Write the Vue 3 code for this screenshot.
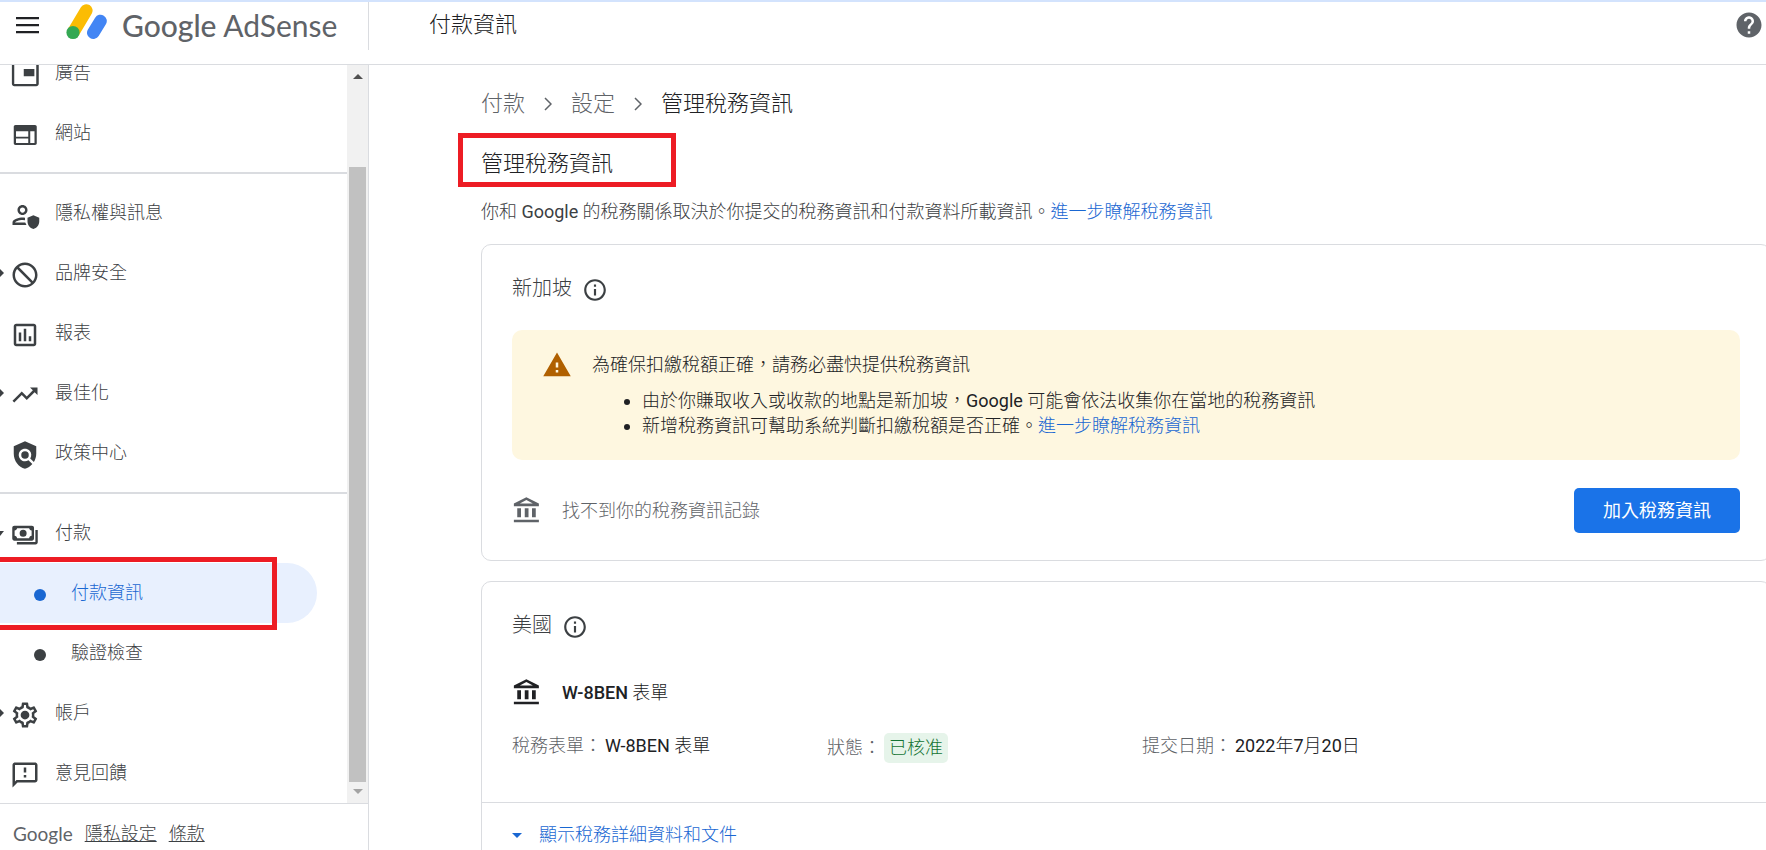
<script setup>
const groups = [
  [
    { label: '廣告', icon: 'ads' },
    { label: '網站', icon: 'sites' },
  ],
  [
    { label: '隱私權與訊息', icon: 'privacy' },
    { label: '品牌安全', icon: 'block', arrow: 'right' },
    { label: '報表', icon: 'reports' },
    { label: '最佳化', icon: 'trend', arrow: 'right' },
    { label: '政策中心', icon: 'policy' },
  ],
  [
    { label: '付款', icon: 'payments', arrow: 'down' },
    { label: '付款資訊', sub: true, active: true },
    { label: '驗證檢查', sub: true },
    { label: '帳戶', icon: 'settings', arrow: 'right' },
    { label: '意見回饋', icon: 'feedback' },
  ],
]

const icons = {
  ads: 'M19.500 13h-8.500V7.200h8.500V13zm3.500 6V4c0-1.100-.9-2-2-2H3.500c-1.100 0-2 .9-2 2v15c0 1.100.9 2 2 2H21c1.100 0 2-.9 2-2zm-2 .2H3.400V3.900H21v15.300z',
  sites: 'M20 4H4.400C3.600 4 3 4.600 3 5.400v13.200c0 .8.6 1.400 1.400 1.400H20c.8 0 1.400-.6 1.400-1.400V5.400C21.400 4.600 20.800 4 20 4zM14.600 18.400H4.800v-3.700h9.800v3.700zm0-5H4.800V9h9.800v4.400zm5 5h-3.400V9h3.400v9.400z',
  privacy: 'M10 12c2.210 0 4-1.790 4-4s-1.790-4-4-4-4 1.790-4 4 1.790 4 4 4zm0-6.100c1.160 0 2.100.940 2.100 2.100s-.940 2.100-2.100 2.100S7.900 9.160 7.900 8 8.840 5.900 10 5.900zM4 18c.220-.720 3.310-2.100 6.300-2l1.700.100V14.100c-.7-.07-1.300-.1-2-.1-2.670 0-8 1.340-8 4v2h11.200l-1-2H4zM18.700 12.200l-4.700 2v3c0 2.900 2 5.200 4.700 6 2.700-.8 4.700-3.100 4.700-6v-3l-4.700-2z',
  block: 'M12 2C6.480 2 2 6.480 2 12s4.480 10 10 10 10-4.480 10-10S17.520 2 12 2zM4 12c0-1.850.630-3.550 1.690-4.900L16.900 18.310C15.550 19.370 13.850 20 12 20c-4.420 0-8-3.580-8-8zm14.310 4.900L7.100 5.690C8.450 4.630 10.150 4 12 4c4.420 0 8 3.580 8 8 0 1.850-.630 3.550-1.690 4.900z',
  reports: 'M19 3H5c-1.100 0-2 .9-2 2v14c0 1.100.9 2 2 2h14c1.100 0 2-.9 2-2V5c0-1.100-.9-2-2-2zm0 16H5V5h14v14zM7 10h2v7H7zm4-3h2v10h-2zm4 6h2v4h-2z',
  trend: 'M16 6l2.290 2.290-4.880 4.880-4-4L2 16.590 3.410 18l6-6 4 4 6.300-6.290L22 12V6z',
  policy: 'M21 5l-9-4-9 4v6c0 5.550 3.840 10.740 9 12 2.300-.560 4.330-1.900 5.880-3.710l-3.120-3.120c-1.940 1.290-4.580 1.070-6.290-.640-1.950-1.950-1.950-5.120 0-7.070 1.950-1.950 5.120-1.950 7.070 0 1.710 1.710 1.920 4.350.640 6.290l2.900 2.900C20.290 15.690 21 13.380 21 11V5zM12 9a3 3 0 1 0 0 6 3 3 0 0 0 0-6z',
  settings: 'M19.430 12.980c.040-.320.070-.640.070-.980s-.030-.660-.070-.980l2.110-1.650c.190-.150.240-.420.120-.640l-2-3.460c-.090-.160-.260-.250-.440-.250-.060 0-.120.010-.170.030l-2.490 1c-.520-.4-1.080-.730-1.690-.980l-.380-2.650C14.460 2.180 14.250 2 14 2h-4c-.250 0-.460.180-.490.420l-.380 2.650c-.610.250-1.170.590-1.690.980l-2.490-1c-.060-.020-.120-.030-.180-.030-.170 0-.340.090-.430.250l-2 3.460c-.130.220-.070.490.120.640l2.110 1.650c-.040.320-.070.650-.070.980s.030.660.070.980l-2.110 1.650c-.190.150-.240.420-.120.640l2 3.460c.090.160.260.250.440.250.060 0 .120-.010.170-.030l2.490-1c.520.4 1.080.730 1.690.980l.380 2.650c.030.240.240.420.490.420h4c.250 0 .460-.180.490-.420l.380-2.650c.610-.250 1.170-.590 1.690-.980l2.490 1c.060.020.120.030.180.030.170 0 .340-.090.430-.250l2-3.460c.120-.220.070-.490-.120-.640l-2.110-1.650zm-1.980-1.710c.040.310.050.520.050.730s-.020.430-.050.730l-.140 1.130.890.7 1.080.840-.7 1.210-1.270-.510-1.040-.420-.9.680c-.430.320-.840.560-1.250.730l-1.060.430-.160 1.130-.2 1.350h-1.400l-.350-2.480-1.060-.430c-.430-.180-.830-.410-1.230-.710l-.910-.7-1.060.430-1.270.510-.7-1.210 1.970-1.540-.140-1.130c-.030-.310-.050-.540-.050-.740s.020-.430.050-.730l.140-1.130-1.970-1.540.7-1.210 2.310.940.9-.680c.430-.320.840-.560 1.250-.730l1.060-.430.360-2.480h1.390l.350 2.480 1.060.430c.430.180.830.410 1.230.710l.910.7 2.330-.940.7 1.210-1.960 1.550.140 1.130zM12 8.500a3.500 3.500 0 1 1 0 7 3.500 3.500 0 0 1 0-7z',
  feedback: 'M20 2H4c-1.100 0-2 .9-2 2v18l4-4h14c1.100 0 2-.9 2-2V4c0-1.100-.9-2-2-2zm0 14H5.170L4 17.170V4h16v12zm-9-4h2v2h-2zm0-6h2v4h-2z',
  payments: 'M17.500 4.500H3.500C2.500 4.500 1.800 5.200 1.800 6.200v8.600c0 1 .7 1.700 1.700 1.700h14c1 0 1.700-.7 1.700-1.700V6.200c0-1-.7-1.700-1.700-1.700zM17.300 12.600c-1.100.2-1.800.9-2 1.900H5.700c-.2-1-.9-1.700-2-1.900V8.400c1.100-.2 1.800-.9 2-1.900h9.600c.2 1 .9 1.700 2 1.900v4.200zM10.500 7.700a2.800 2.800 0 1 0 0 5.600 2.800 2.800 0 0 0 0-5.600zM22.200 8v9.800c0 1-.7 1.700-1.700 1.700H5.500v-1.900h14.800V8h1.900z',
  bank: 'M7.200 9.800H4.200V17h3V9.800zm6 0h-3V17h3V9.800zM21.500 19h-20v2h20v-2zM19 9.800h-3V17h3V9.800zM11.500 3.260 16.710 6H6.290l5.210-2.740zM11.500 1l-10 5v2.200h20V6l-10-5z',
  info: 'M11 7h2v2h-2zm0 4h2v6h-2zm1-9C6.480 2 2 6.480 2 12s4.480 10 10 10 10-4.480 10-10S17.520 2 12 2zm0 18c-4.410 0-8-3.590-8-8s3.590-8 8-8 8 3.590 8 8-3.590 8-8 8z',
}
</script>

<template>
  <div class="app">
    <header class="topbar">
      <div class="brand">
        <button class="icon-button" aria-label="選單">
          <svg class="menu-icon" viewBox="0 0 24 18"><path d="M1 1h23v2.200H1zM1 8h23v2.200H1zM1 15h23v2.200H1z" /></svg>
        </button>
        <svg class="logo" viewBox="0 0 42 38">
          <path d="M7.500 28 20.300 6.500" stroke="#fbbc04" stroke-width="12.600" stroke-linecap="round" />
          <path d="M27.300 28.700 34.500 17" stroke="#4285f4" stroke-width="12.600" stroke-linecap="round" />
          <circle cx="7" cy="28.500" r="6.600" fill="#34a853" />
        </svg>
        <span class="wordmark"><span class="wordmark-strong">Google</span> AdSense</span>
      </div>
      <div class="page-title">付款資訊</div>
      <button class="icon-button help" aria-label="說明">
        <svg viewBox="0 0 24 24"><path d="M12 2C6.480 2 2 6.480 2 12s4.480 10 10 10 10-4.480 10-10S17.520 2 12 2zm1 17h-2v-2h2v2zm2.070-7.750-.9.920C13.450 12.900 13 13.500 13 15h-2v-.5c0-1.100.450-2.100 1.170-2.830l1.240-1.260c.370-.360.590-.860.590-1.410 0-1.100-.9-2-2-2s-2 .9-2 2H8c0-2.210 1.790-4 4-4s4 1.790 4 4c0 .880-.360 1.680-.930 2.250z" /></svg>
      </button>
    </header>

    <div class="body">
      <aside class="sidebar">
        <div class="scroller">
          <nav class="nav">
            <ul v-for="(group, i) in groups" :key="i" class="group">
              <li v-for="item in group" :key="item.label" class="entry">
                <a href="#" class="item" :class="{ sub: item.sub, active: item.active }">
                  <span v-if="item.arrow" class="arrow" :class="item.arrow"></span>
                  <span v-if="item.sub" class="dot"></span>
                  <svg v-else class="nav-icon" viewBox="0 0 24 24"><path fill-rule="evenodd" :d="icons[item.icon]" /></svg>
                  <span>{{ item.label }}</span>
                </a>
                <span v-if="item.active" class="mark mark-nav"></span>
              </li>
            </ul>
          </nav>
          <div class="scrollbar">
            <span class="scroll-arrow up"></span>
            <span class="thumb"></span>
            <span class="scroll-arrow down"></span>
          </div>
        </div>
        <footer class="legal">
          <span class="legal-logo">Google</span>
          <a href="#">隱私設定</a>
          <a href="#">條款</a>
        </footer>
      </aside>

      <main class="main">
        <nav class="crumbs">
          <a href="#">付款</a>
          <svg viewBox="0 0 8 14"><path d="M1 1l6 6-6 6" /></svg>
          <a href="#">設定</a>
          <svg viewBox="0 0 8 14"><path d="M1 1l6 6-6 6" /></svg>
          <span class="current">管理稅務資訊</span>
        </nav>
        <div class="heading">
          <h1>管理稅務資訊</h1>
          <span class="mark mark-heading"></span>
        </div>
        <p class="intro">你和 <span class="latin">Google</span> 的稅務關係取決於你提交的稅務資訊和付款資料所載資訊。<a href="#">進一步瞭解稅務資訊</a></p>

        <section class="card">
          <div class="card-title">
            <h2>新加坡</h2>
            <svg viewBox="0 0 24 24"><path :d="icons.info" /></svg>
          </div>
          <div class="notice">
            <svg viewBox="0 0 24 24"><path d="M1 21h22L12 2 1 21zm12-3h-2v-2h2v2zm0-4h-2v-4h2v4z" /></svg>
            <div>
              <p>為確保扣繳稅額正確，請務必盡快提供稅務資訊</p>
              <ul>
                <li>由於你賺取收入或收款的地點是新加坡，<span class="latin">Google</span> 可能會依法收集你在當地的稅務資訊</li>
                <li>新增稅務資訊可幫助系統判斷扣繳稅額是否正確。<a href="#">進一步瞭解稅務資訊</a></li>
              </ul>
            </div>
          </div>
          <div class="record">
            <svg class="bank" viewBox="0 0 24 24"><path fill-rule="evenodd" :d="icons.bank" /></svg>
            <span>找不到你的稅務資訊記錄</span>
            <button class="primary">加入稅務資訊</button>
          </div>
        </section>

        <section class="card">
          <div class="card-title">
            <h2>美國</h2>
            <svg viewBox="0 0 24 24"><path :d="icons.info" /></svg>
          </div>
          <div class="form-name">
            <svg class="bank" viewBox="0 0 24 24"><path fill-rule="evenodd" :d="icons.bank" /></svg>
            <span><span class="medium">W-8BEN</span> 表單</span>
          </div>
          <dl class="facts">
            <div><dt>稅務表單：</dt><dd><span class="latin">W-8BEN</span> 表單</dd></div>
            <div><dt>狀態：</dt><dd class="badge">已核准</dd></div>
            <div><dt>提交日期：</dt><dd><span class="latin">2022</span>年<span class="latin">7</span>月<span class="latin">20</span>日</dd></div>
          </dl>
          <button class="expand"><span class="caret"></span>顯示稅務詳細資料和文件</button>
        </section>
      </main>
    </div>
  </div>
</template>

<style>
body {
  overflow: hidden;
  background: #fff;
}
</style>

<style scoped>
.app {
  height: 100vh;
  display: flex;
  flex-direction: column;
  box-sizing: border-box;
  border-top: 2px solid #d3e3fd;
  font-family: Roboto, "Noto Sans CJK TC", sans-serif;
  font-size: 18px;
  font-weight: 300;
  line-height: 26px;
  color: #202124;
}
.app * {
  box-sizing: border-box;
}
ul, p, h1, h2, dl, dd {
  margin: 0;
  padding: 0;
  font-size: inherit;
  font-weight: inherit;
}
a {
  color: #1a67d2;
  text-decoration: none;
}
button {
  margin: 0;
  border: 0;
  background: none;
  font: inherit;
  cursor: pointer;
}
.latin {
  font-weight: 400;
}
.medium {
  font-weight: 500;
}
.mark {
  position: absolute;
  border: 5px solid #ed1c24;
  pointer-events: none;
}

.topbar {
  flex: none;
  height: 63px;
  display: flex;
  align-items: flex-start;
  border-bottom: 1px solid #dadce0;
}
.brand {
  width: 369px;
  height: 48px;
  display: flex;
  align-items: center;
  padding: 0 0 2px 15px;
  border-right: 1px solid #dadce0;
}
.icon-button {
  display: flex;
  padding: 0;
}
.menu-icon {
  width: 24px;
  height: 18px;
  fill: #202124;
}
.logo {
  width: 42px;
  height: 38px;
  margin: 0 14px 4px 27px;
  fill: none;
}
.wordmark {
  font-family: Lato, sans-serif;
  font-size: 30px;
  font-weight: 400;
  line-height: 40px;
  color: #5f6368;
}
.wordmark-strong {
  font-weight: 500;
}
.page-title {
  flex: 1;
  padding-left: 60px;
  font-size: 22px;
  line-height: 46px;
}
.help {
  margin: 8px 2px 0 0;
}
.help svg {
  width: 30px;
  height: 30px;
  fill: #5f6368;
}

.body {
  flex: 1;
  min-height: 0;
  display: flex;
}
.sidebar {
  flex: none;
  width: 369px;
  display: flex;
  flex-direction: column;
  border-right: 1px solid #dadce0;
  color: #3c4043;
}
.scroller {
  flex: 1;
  min-height: 0;
  display: flex;
}
.nav {
  flex: 1;
  display: flex;
  flex-direction: column;
  justify-content: flex-end;
  overflow: hidden;
}
.group {
  flex: none;
  list-style: none;
}
.group + .group {
  margin-top: 9px;
  padding-top: 9px;
  border-top: 2px solid #dadce0;
}
.entry {
  position: relative;
}
.item {
  position: relative;
  height: 60px;
  margin-right: 30px;
  display: flex;
  align-items: center;
  gap: 15px;
  padding-left: 10px;
  color: inherit;
}
.item.sub {
  gap: 25px;
  padding-left: 34px;
}
.item.active {
  background: #e8f0fe;
  border-radius: 0 30px 30px 0;
  color: #1967d2;
}
.nav-icon {
  width: 30px;
  height: 30px;
  margin-top: 4px;
  fill: #3c4043;
}
.dot {
  width: 12px;
  height: 12px;
  margin-top: 4px;
  border-radius: 50%;
  background: currentColor;
}
.arrow {
  position: absolute;
  left: 0;
  border: 4px solid transparent;
}
.arrow.right {
  border-left: 4px solid #3c4043;
  border-right: 0;
}
.arrow.down {
  border-top: 5px solid #3c4043;
  border-left: 0;
  border-bottom: 0;
}
.mark-nav {
  top: -6px;
  bottom: -7px;
  left: -5px;
  right: 70px;
}
.scrollbar {
  width: 21px;
  display: flex;
  flex-direction: column;
  align-items: center;
  padding: 9px 2px;
  background: #f1f1f1;
}
.scroll-arrow {
  border: 5px solid transparent;
}
.scroll-arrow.up {
  border-top: 0;
  border-bottom-color: #505050;
}
.scroll-arrow.down {
  border-bottom: 0;
  border-top-color: #a3a3a3;
}
.thumb {
  flex: 1;
  width: 17px;
  margin: 88px 0 7px;
  background: #c1c1c1;
}
.legal {
  flex: none;
  height: 47px;
  display: flex;
  align-items: center;
  gap: 12px;
  padding: 14px 0 0 13px;
  border-top: 1px solid #dadce0;
}
.legal a {
  color: inherit;
  text-decoration: underline;
}
.legal-logo {
  font-family: Lato, sans-serif;
  font-size: 19px;
  font-weight: 400;
  color: #5f6368;
}

.main {
  flex: 1;
  min-width: 0;
  padding: 23px 0 0 112px;
  overflow: hidden;
}
.crumbs {
  display: flex;
  align-items: center;
  gap: 19px;
  font-size: 22px;
  line-height: 32px;
}
.crumbs a {
  color: #5f6368;
}
.crumbs svg {
  width: 8px;
  height: 14px;
  fill: none;
  stroke: #5f6368;
  stroke-width: 1.500;
}
.heading {
  position: relative;
  margin-top: 28px;
  font-size: 22px;
  line-height: 32px;
}
.mark-heading {
  top: -15px;
  left: -23px;
  width: 218px;
  height: 54px;
}
.intro {
  margin-top: 19px;
  color: #3c4043;
}
.card {
  margin: 19px -5px 0 0;
  padding: 27px 30px 27px;
  border: 1px solid #dadce0;
  border-radius: 10px;
}
.card + .card {
  margin-top: 20px;
}
.card-title {
  display: flex;
  align-items: center;
  gap: 10px;
  font-size: 20px;
  line-height: 32px;
  color: #3c4043;
}
.card-title svg {
  width: 26px;
  height: 26px;
  margin-top: 4px;
  fill: #3c4043;
}
.notice {
  display: flex;
  gap: 20px;
  margin-top: 26px;
  padding: 20px 30px 22px;
  border-radius: 10px;
  background: #fef7e0;
}
.notice svg {
  flex: none;
  width: 30px;
  height: 30px;
  fill: #b06000;
}
.notice p {
  line-height: 30px;
}
.notice ul {
  margin-top: 8px;
  padding-left: 50px;
  line-height: 25px;
}
.record {
  display: flex;
  align-items: center;
  margin-top: 28px;
  color: #5f6368;
}
.bank {
  width: 30px;
  height: 30px;
  margin-right: 20px;
  fill: currentColor;
}
.primary {
  height: 45px;
  margin-left: auto;
  padding: 0 29px;
  border-radius: 5px;
  background: #1a73e8;
  color: #fff;
  font-weight: 400;
}
.form-name {
  display: flex;
  align-items: center;
  margin-top: 37px;
}
.facts {
  display: grid;
  grid-template-columns: 315px 315px 1fr;
  align-items: start;
  margin-top: 25px;
}
.facts div {
  display: flex;
  align-items: center;
  gap: 3px;
}
.facts dt {
  color: #5f6368;
}
.badge {
  padding: 2px 5px;
  border-radius: 5px;
  background: #e6f4ea;
  color: #137333;
}
.expand {
  display: flex;
  align-items: center;
  gap: 17px;
  width: calc(100% + 60px);
  margin: 39px -30px 0;
  padding: 19px 30px 0;
  border-top: 1px solid #dadce0;
  color: #1967d2;
}
.caret {
  border: 5px solid transparent;
  border-top-color: currentColor;
  border-bottom: 0;
}
</style>
